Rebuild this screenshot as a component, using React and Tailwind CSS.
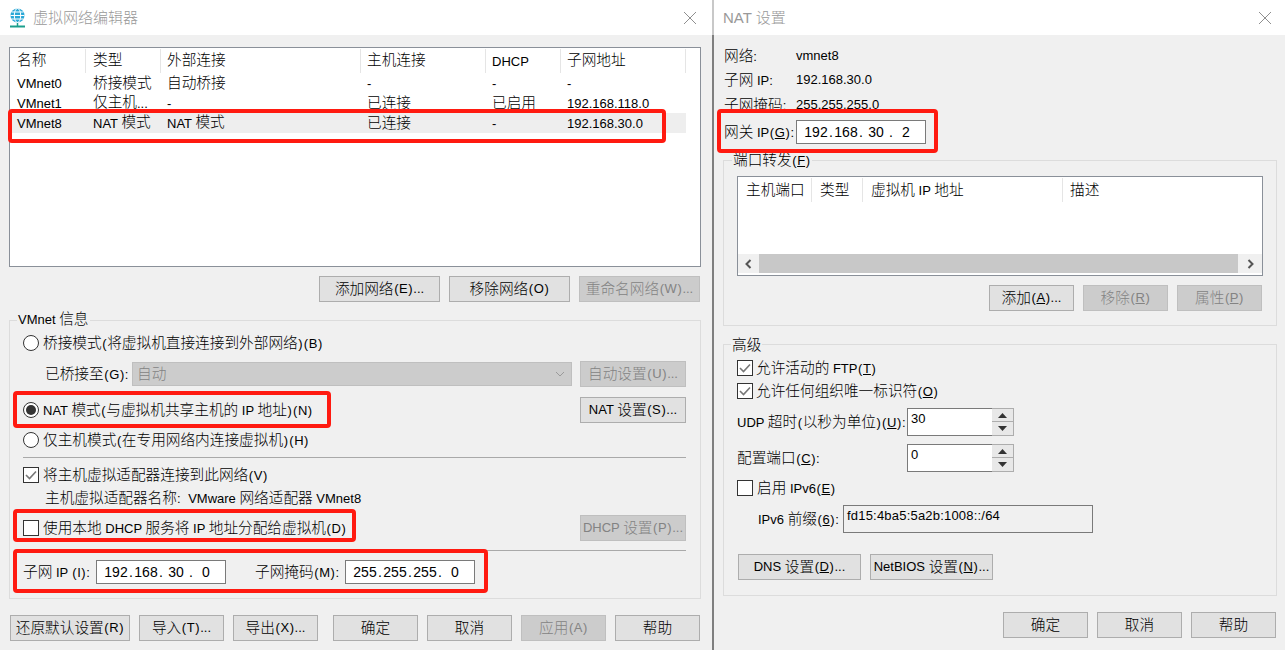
import React from "react";

const T = ({ children, up }) => {
  const parts = String(children).split(/([\x00-\x7f]+)/).filter(Boolean);
  return (
    <>
      {parts.map((p, i) => {
        if (!/^[\x00-\x7f]/.test(p)) {
          return (
            <span key={i} className={up ? "relative -top-px" : ""}>
              {p}
            </span>
          );
        }
        const seg = p.split(/&(.)/);
        return (
          <span key={i} className="text-[13px]">
            {seg.map((s, j) =>
              j % 2 ? (
                <span key={j} className="underline">{s}</span>
              ) : (
                s.split(/([()])/).map((c, k) =>
                  c === "(" || c === ")" ? (
                    <span key={j + "-" + k} className="mx-[0.6px]">{c}</span>
                  ) : (
                    c
                  )
                )
              )
            )}
          </span>
        );
      })}
    </>
  );
};

const Btn = ({ className = "", disabled, children }) => (
  <button
    className={
      "h-[26px] shrink-0 flex items-center justify-center border whitespace-pre " +
      (disabled
        ? "bg-[#cccccc] border-[#bfbfbf] text-[#838383] "
        : "bg-[#e1e1e1] border-[#adadad] text-black ") +
      className
    }
  >
    <T>{children}</T>
  </button>
);

const Radio = ({ on }) => (
  <span className="w-[16px] h-[16px] shrink-0 rounded-full border border-[#333333] bg-white flex items-center justify-center">
    {on && <span className="w-[10px] h-[10px] rounded-full bg-[#333333]" />}
  </span>
);

const Check = ({ on }) => (
  <span className="w-[16px] h-[16px] shrink-0 border border-[#333333] bg-white flex items-center justify-center">
    {on && (
      <svg width="12" height="10" viewBox="0 0 12 10" fill="none">
        <path d="M1 5 L4.5 8.5 L11 1.5" stroke="#777777" strokeWidth="1.6" />
      </svg>
    )}
  </span>
);

const IpField = ({ v }) => (
  <div className="w-[130px] h-[24px] shrink-0 border border-[#7a7a7a] bg-white flex items-center pl-[7px] text-[14px]">
    {v.map((s, i) => (
      <React.Fragment key={i}>
        {i > 0 && <span className="w-[6px] text-center">.</span>}
        <span className="w-[24px] text-center">{s}</span>
      </React.Fragment>
    ))}
  </div>
);

const Group = ({ title, className = "", legendClass = "-mt-[10px] ml-[7px]", children }) => (
  <div className={"border border-[#dcdcdc] " + className}>
    <div className={"w-fit bg-[#f0f0f0] px-[1px] h-[20px] flex items-center " + legendClass}>
      <span><T>{title}</T></span>
    </div>
    {children}
  </div>
);

const TitleBar = ({ icon, title, xClass }) => (
  <div className="h-[35px] shrink-0 bg-white flex items-center text-[#999999] text-[15px]">
    {icon}
    <span className="flex-1">{title}</span>
    <svg className={xClass} width="14" height="14" viewBox="0 0 14 14" fill="none">
      <path d="M1 1 L13 13 M13 1 L1 13" stroke="#8f8f8f" strokeWidth="1" />
    </svg>
  </div>
);

const Spin = () => (
  <div className="w-[22px] h-[28px] flex flex-col border border-l-0 border-[#adadad] bg-[#e8e8e8]">
    <div className="h-[13px] flex items-center justify-center border-b border-[#adadad]">
      <svg width="9" height="5" viewBox="0 0 9 5"><path d="M4.5 0 L9 5 L0 5 Z" fill="#333333" /></svg>
    </div>
    <div className="flex-1 flex items-center justify-center">
      <svg width="9" height="5" viewBox="0 0 9 5"><path d="M0 0 L9 0 L4.5 5 Z" fill="#333333" /></svg>
    </div>
  </div>
);

const leftCols = "grid grid-cols-[76px_75px_200px_125px_75px_125px] w-[676px]";
const rows = [
  ["VMnet0", "桥接模式", "自动桥接", "-", "-", "-"],
  ["VMnet1", "仅主机...", "-", "已连接", "已启用", "192.168.118.0"],
  ["VMnet8", "NAT 模式", "NAT 模式", "已连接", "-", "192.168.30.0"],
];
const heads = ["名称", "类型", "外部连接", "主机连接", "DHCP", "子网地址"];

const RedBox = ({ className }) => (
  <div className={"absolute border-[4px] border-[#ff1a10] rounded-[4px] pointer-events-none " + className} />
);

export default function App() {
  return (
    <div
      className="relative w-[1285px] h-[650px] overflow-hidden flex text-black text-[14.67px] font-light leading-[20px] bg-[#f0f0f0]"
      style={{ fontFamily: '"Liberation Sans","Noto Sans CJK SC",sans-serif' }}
    >
      {/* left dialog */}
      <div className="w-[712px] shrink-0 flex flex-col">
        <TitleBar
          title="虚拟网络编辑器"
          xClass="mr-[15px]"
          icon={
            <svg className="ml-[9px] mr-[7px]" width="17" height="20" viewBox="0 0 17 20" fill="none">
              <circle cx="8.5" cy="7.5" r="7" fill="#2aa7d6" />
              <path d="M1.5 7.5 H15.5 M2.5 4 H14.5 M2.5 11 H14.5" stroke="#ffffff" strokeWidth="1" />
              <ellipse cx="8.5" cy="7.5" rx="3.2" ry="7" stroke="#ffffff" strokeWidth="1" />
              <path d="M8.5 15 V18" stroke="#1b9f8c" strokeWidth="1.5" />
              <path d="M1 18.5 H16" stroke="#1b9f8c" strokeWidth="2" />
            </svg>
          }
        />
        <div className="flex-1 px-[9px] pt-[12px] w-[701px] box-content">
          {/* table */}
          <div className="w-[692px] h-[220px] border border-[#8a9099] bg-white">
            <div className={leftCols + " h-[25px] pt-[1px]"}>
              {heads.map((h, j) => (
                <div key={h} className={(j >= 2 ? "pl-[6px]" : "pl-[7px]") + " border-r border-[#e5e5e5] flex items-center"}>
                  <span><T up>{h}</T></span>
                </div>
              ))}
            </div>
            {rows.map((r, i) => (
              <div key={i} className={leftCols + " h-[20px] " + (i === 2 ? "bg-[#eeeeee]" : "")}>
                {r.map((c, j) => (
                  <div key={j} className={(j >= 2 ? "pl-[6px]" : "pl-[7px]") + " flex items-center whitespace-pre"}>
                    <span><T up>{c}</T></span>
                  </div>
                ))}
              </div>
            ))}
          </div>

          {/* table buttons */}
          <div className="mt-[9px] w-[691px] flex justify-end gap-[9px]">
            <Btn className="w-[121px]">添加网络(E)...</Btn>
            <Btn className="w-[121px]">移除网络(O)</Btn>
            <Btn className="w-[121px]" disabled>重命名网络(W)...</Btn>
          </div>

          {/* VMnet info */}
          <Group title="VMnet 信息" legendClass="-mt-[12px] ml-[7px]" className="mt-[18px] w-[692px] h-[279px]">
            <div className="pl-[13px] pr-[14px] flex flex-col mt-[1px]">
              <div className="h-[26px] flex items-center gap-[4px]">
                <Radio />
                <span><T>桥接模式(将虚拟机直接连接到外部网络)(B)</T></span>
              </div>
              <div className="mt-[5px] h-[26px] flex items-center">
                <span className="ml-[22px] w-[87px] whitespace-pre"><T>已桥接至(G):</T></span>
                <div className="w-[440px] h-[24px] bg-[#cccccc] border border-[#bfbfbf] flex items-center justify-between pl-[4px] pr-[6px] text-[#838383]">
                  <span>自动</span>
                  <svg width="10" height="6" viewBox="0 0 10 6" fill="none">
                    <path d="M1 1 L5 5 L9 1" stroke="#9a9a9a" strokeWidth="1" />
                  </svg>
                </div>
                <Btn className="ml-[8px] w-[106px]" disabled>自动设置(U)...</Btn>
              </div>
              <div className="mt-[10px] h-[26px] flex items-center gap-[4px]">
                <Radio on />
                <span><T>NAT 模式(与虚拟机共享主机的 IP 地址)(N)</T></span>
                <Btn className="ml-auto w-[106px]">NAT 设置(S)...</Btn>
              </div>
              <div className="mt-[5px] h-[24px] flex items-center gap-[4px]">
                <Radio />
                <span><T>仅主机模式(在专用网络内连接虚拟机)(H)</T></span>
              </div>
              <div className="mt-[5px] h-px bg-[#a9a9a9]" />
              <div className="mt-[5px] h-[24px] flex items-center gap-[4px]">
                <Check on />
                <span><T>将主机虚拟适配器连接到此网络(V)</T></span>
              </div>
              <div className="h-[22px] flex items-center pl-[22px]">
                <span className="whitespace-pre"><T>主机虚拟适配器名称: </T></span>
                <span className="ml-[4px]"><T>VMware 网络适配器 VMnet8</T></span>
              </div>
              <div className="mt-[6px] h-[26px] flex items-center gap-[4px]">
                <Check />
                <span><T>使用本地 DHCP 服务将 IP 地址分配给虚拟机(D)</T></span>
                <Btn className="ml-auto w-[106px]" disabled>DHCP 设置(P)...</Btn>
              </div>
              <div className="mt-[9px] h-px bg-[#a9a9a9]" />
              <div className="mt-[9px] h-[24px] flex items-center">
                <span className="w-[73px] whitespace-pre"><T>子网 IP (I):</T></span>
                <IpField v={["192", "168", "30", "0"]} />
                <span className="ml-[29px] w-[90px] whitespace-pre"><T>子网掩码(M):</T></span>
                <IpField v={["255", "255", "255", "0"]} />
              </div>
            </div>
          </Group>

          {/* bottom buttons */}
          <div className="mt-[16px] ml-[1px] flex">
            <Btn className="w-[120px]">还原默认设置(R)</Btn>
            <Btn className="ml-[9px] w-[85px]">导入(T)...</Btn>
            <Btn className="ml-[9px] w-[85px]">导出(X)...</Btn>
            <Btn className="ml-[15px] w-[85px]">确定</Btn>
            <Btn className="ml-[9px] w-[85px]">取消</Btn>
            <Btn className="ml-[9px] w-[85px]" disabled>应用(A)</Btn>
            <Btn className="ml-[9px] w-[85px]">帮助</Btn>
          </div>
        </div>
      </div>

      {/* divider between windows */}
      <div className="w-[2px] shrink-0 flex flex-col">
        <div className="h-[35px] bg-[#c8c8c8]" />
        <div className="flex-1 bg-[#7f7f7f]" />
      </div>

      {/* right dialog */}
      <div className="flex-1 flex flex-col min-w-0">
        <TitleBar
          title="NAT 设置"
          xClass="mr-[13px]"
          icon={<span className="w-[9px]" />}
        />
        <div className="flex-1 pl-[9px] pr-[8px] pt-[9px]">
          <div className="h-[24px] flex items-center ml-[1px]">
            <span className="w-[72px]"><T>网络:</T></span>
            <span className="text-[13px]">vmnet8</span>
          </div>
          <div className="h-[24px] flex items-center ml-[1px]">
            <span className="w-[72px] whitespace-pre"><T>子网 IP:</T></span>
            <span className="text-[13px]">192.168.30.0</span>
          </div>
          <div className="mt-[1px] h-[24px] flex items-center ml-[1px]">
            <span className="w-[72px] whitespace-pre"><T>子网掩码:</T></span>
            <span className="text-[13px]">255.255.255.0</span>
          </div>
          <div className="mt-[3px] h-[24px] flex items-center ml-[1px]">
            <span className="w-[72px] whitespace-pre"><T>网关 IP(&G):</T></span>
            <IpField v={["192", "168", "30", "2"]} />
          </div>

          <Group title="端口转发(&F)" legendClass="-mt-[11px] ml-[8px]" className="mt-[16px] h-[166px]">
            <div className="pl-[13px] pr-[13px] pt-[6px]">
              <div className="h-[100px] border border-[#8a9099] bg-white flex flex-col">
                <div className="grid grid-cols-[74px_51px_200px_1fr] h-[25px] pt-[1px]">
                  {["主机端口", "类型", "虚拟机 IP 地址"].map((h) => (
                    <div key={h} className="pl-[8px] border-r border-[#e5e5e5] flex items-center whitespace-pre">
                      <span><T>{h}</T></span>
                    </div>
                  ))}
                  <div className="pl-[7px] flex items-center"><span>描述</span></div>
                </div>
                <div className="mt-auto mb-[2px] h-[19px] flex">
                  <div className="w-[21px] flex items-center justify-center bg-[#f0f0f0]">
                    <svg width="7" height="10" viewBox="0 0 7 10" fill="none">
                      <path d="M5.5 1 L1.5 5 L5.5 9" stroke="#555555" strokeWidth="2" />
                    </svg>
                  </div>
                  <div className="flex-1 bg-[#c8c8c8]" />
                  <div className="w-[24px] flex items-center justify-center bg-[#f0f0f0]">
                    <svg width="7" height="10" viewBox="0 0 7 10" fill="none">
                      <path d="M1.5 1 L5.5 5 L1.5 9" stroke="#555555" strokeWidth="2" />
                    </svg>
                  </div>
                </div>
              </div>
              <div className="mt-[9px] flex justify-end gap-[9px] mr-[1px]">
                <Btn className="w-[85px]">添加(&A)...</Btn>
                <Btn className="w-[85px]" disabled>移除(&R)</Btn>
                <Btn className="w-[85px]" disabled>属性(&P)</Btn>
              </div>
            </div>
          </Group>

          <Group title="高级" className="mt-[18px] h-[252px]">
            <div className="pl-[13px] pt-[2px] flex flex-col">
              <div className="h-[22px] flex items-center gap-[3px]">
                <Check on />
                <span><T>允许活动的 FTP(&T)</T></span>
              </div>
              <div className="mt-[1px] h-[22px] flex items-center gap-[3px]">
                <Check on />
                <span><T>允许任何组织唯一标识符(&O)</T></span>
              </div>
              <div className="mt-[6px] h-[28px] flex items-center">
                <span className="w-[170px] whitespace-pre"><T>UDP 超时(以秒为单位)(&U):</T></span>
                <div className="w-[85px] h-[28px] border border-[#7a7a7a] border-r-0 bg-white pl-[3px] text-[13px]">30</div>
                <Spin />
              </div>
              <div className="mt-[8px] h-[28px] flex items-center">
                <span className="w-[170px] whitespace-pre"><T>配置端口(&C):</T></span>
                <div className="w-[85px] h-[28px] border border-[#7a7a7a] border-r-0 bg-white pl-[3px] text-[13px]">0</div>
                <Spin />
              </div>
              <div className="mt-[5px] h-[22px] flex items-center gap-[4px]">
                <Check />
                <span><T>启用 IPv6(&E)</T></span>
              </div>
              <div className="mt-[6px] h-[28px] flex items-center">
                <span className="ml-[21px] w-[85px] whitespace-pre"><T>IPv6 前缀(&6):</T></span>
                <div className="w-[250px] h-[28px] border border-[#7a7a7a] bg-[#f0f0f0] pl-[3px] text-[13px] tracking-[0.2px]">
                  fd15:4ba5:5a2b:1008::/64
                </div>
              </div>
              <div className="mt-[21px] ml-[1px] flex gap-[9px]">
                <Btn className="w-[123px]">DNS 设置(&D)...</Btn>
                <Btn className="w-[123px]">NetBIOS 设置(&N)...</Btn>
              </div>
            </div>
          </Group>

          <div className="mt-[16px] mr-[1px] flex justify-end gap-[9px]">
            <Btn className="w-[85px]">确定</Btn>
            <Btn className="w-[85px]">取消</Btn>
            <Btn className="w-[85px]">帮助</Btn>
          </div>
        </div>
      </div>

      {/* red annotation boxes */}
      <RedBox className="left-[8px] top-[109px] w-[658px] h-[34px]" />
      <RedBox className="left-[13px] top-[391px] w-[318px] h-[37px]" />
      <RedBox className="left-[13px] top-[509px] w-[343px] h-[33px]" />
      <RedBox className="left-[13px] top-[549px] w-[475px] h-[44px]" />
      <RedBox className="left-[717px] top-[109px] w-[221px] h-[44px]" />
    </div>
  );
}
